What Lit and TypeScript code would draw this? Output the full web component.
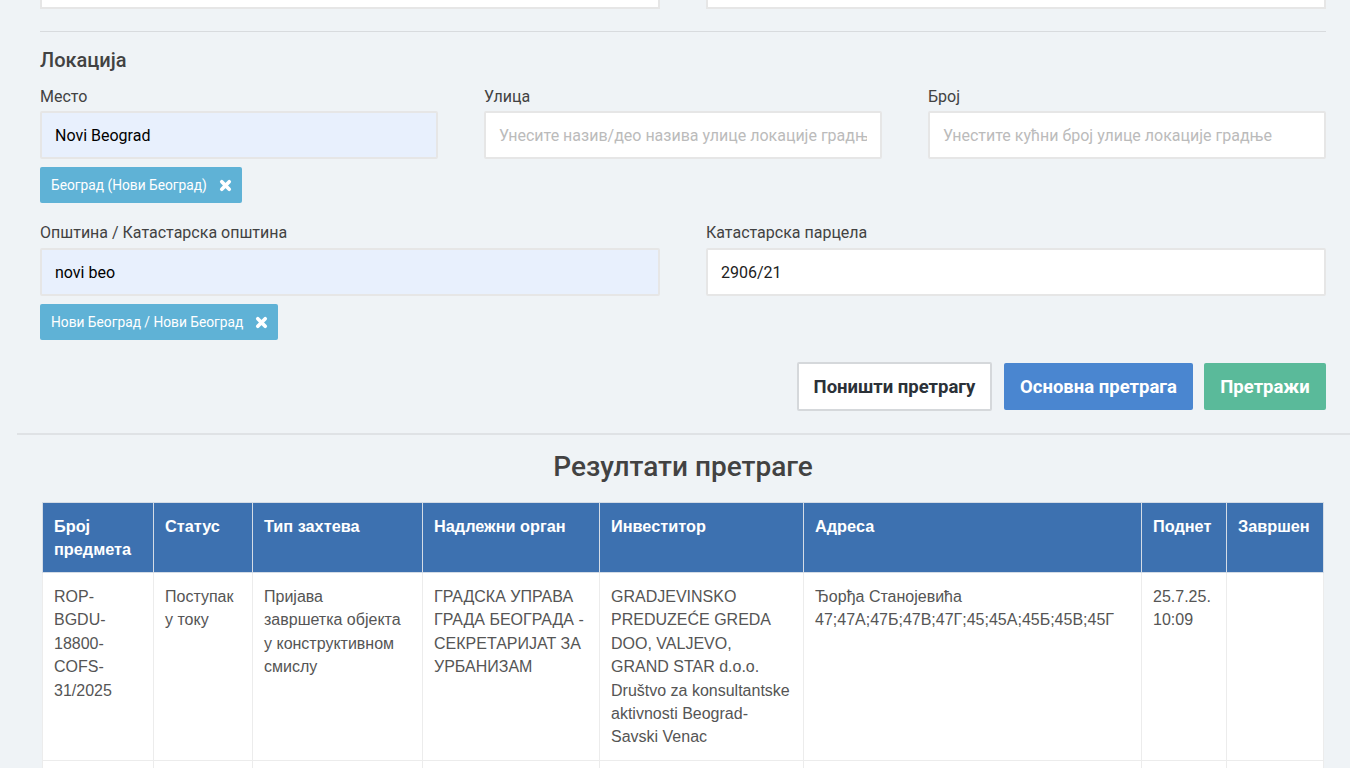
import { LitElement, html, css } from 'lit';
import { customElement } from 'lit/decorators.js';

const columns = [
  { title: 'Број предмета', width: 111 },
  { title: 'Статус', width: 99 },
  { title: 'Тип захтева', width: 170 },
  { title: 'Надлежни орган', width: 177 },
  { title: 'Инвеститор', width: 204 },
  { title: 'Адреса', width: 338 },
  { title: 'Поднет', width: 85 },
  { title: 'Завршен', width: 97 },
];

const rows = [
  [
    'ROP-BGDU-18800-COFS-31/2025',
    'Поступак у току',
    'Пријава\nзавршетка објекта у конструктивном смислу',
    'ГРАДСКА УПРАВА ГРАДА БЕОГРАДА - СЕКРЕТАРИЈАТ ЗА УРБАНИЗАМ',
    'GRADJEVINSKO PREDUZEĆE GREDA DOO, VALJEVO, GRAND STAR d.o.o. Društvo za konsultantske aktivnosti Beograd-Savski Venac',
    'Ђорђа Станојевића 47;47А;47Б;47В;47Г;45;45А;45Б;45В;45Г',
    '25.7.25. 10:09',
    '',
  ],
];

@customElement('app-root')
export class AppRoot extends LitElement {
  static styles = css`
    :host {
      display: block;
      height: 768px;
      overflow: hidden;
      background: #eff3f6;
      font-family: Roboto, sans-serif;
      color: #424242;
    }

    .form {
      padding: 0 24px 0 40px;
    }

    .cut-row {
      display: grid;
      grid-template-columns: 620px 620px;
      gap: 46px;
    }

    .cut-input {
      height: 9px;
      box-sizing: border-box;
      background: #fff;
      border: 2px solid #e6e6e6;
      border-top: none;
    }

    .rule {
      height: 1px;
      background: #d8dbde;
      margin-top: 22px;
    }

    h3 {
      margin: 16px 0 0;
      font-size: 20px;
      line-height: 24px;
      font-weight: 500;
      color: #424242;
    }

    .row-3 {
      display: grid;
      grid-template-columns: repeat(3, 398px);
      gap: 46px;
      margin-top: 15px;
    }

    .row-2 {
      display: grid;
      grid-template-columns: 620px 620px;
      gap: 46px;
      margin-top: 20px;
    }

    .row-2 label {
      margin-bottom: 6px;
    }

    label {
      display: block;
      font-size: 16px;
      line-height: 19px;
      margin-bottom: 5px;
      color: #424242;
    }

    input {
      display: block;
      width: 100%;
      height: 48px;
      box-sizing: border-box;
      padding: 0 13px;
      border: 2px solid #e6e6e6;
      border-radius: 2px;
      background: #fff;
      font: 16px Roboto, sans-serif;
      color: #212121;
      outline: none;
    }

    input.filled {
      background: #e8f0fd;
      color: #000;
    }

    input::placeholder {
      color: #bbb;
      opacity: 1;
    }

    .chip {
      display: inline-flex;
      align-items: center;
      gap: 12px;
      height: 36px;
      margin-top: 8px;
      padding: 0 10px 0 11px;
      box-sizing: border-box;
      border-radius: 2px;
      background: #5fb2d6;
      color: #fff;
      font-size: 13.75px;
      vertical-align: top;
    }

    .chip svg {
      width: 13px;
      height: 13px;
      display: block;
    }

    .actions {
      display: flex;
      justify-content: flex-end;
      align-items: center;
      gap: 11px;
      margin-top: 22px;
    }

    button {
      height: 47px;
      box-sizing: border-box;
      border: none;
      border-radius: 2px;
      color: #fff;
      font: 700 18.5px Roboto, sans-serif;
      padding: 0;
    }

    .reset {
      width: 195px;
      height: 49px;
      margin-right: 1px;
      background: #fff;
      border: 2px solid #d5d8db;
      color: #2b3138;
    }

    .basic {
      width: 189px;
      background: #4a86d0;
    }

    .search {
      width: 122px;
      background: #5aba9a;
    }

    .divider {
      height: 2px;
      margin: 22px 0 0 17px;
      background: #dfe2e5;
    }

    h2 {
      margin: 15px 0 0;
      text-align: center;
      padding-left: 16px;
      font-size: 28px;
      line-height: 34px;
      font-weight: 500;
      color: #424242;
    }

    table {
      margin: 18px 0 0 42px;
      width: 1281px;
      table-layout: fixed;
      border-collapse: collapse;
      font-family: 'Liberation Sans', Arial, sans-serif;
    }

    th {
      background: #3d71b0;
      color: #fff;
      height: 70px;
      box-sizing: border-box;
      padding: 12px 11px 10px;
      text-align: left;
      vertical-align: top;
      font-size: 16.3px;
      line-height: 23.4px;
      font-weight: 700;
      border: 1px solid #d4dce6;
    }

    td {
      background: #fff;
      padding: 12px 11px 11px;
      vertical-align: top;
      font-size: 16px;
      line-height: 23.4px;
      color: #555;
      border: 1px solid #ececec;
      white-space: pre-line;
    }
  `;

  private chip(text: string) {
    return html`<div class="chip">
      <span>${text}</span>
      <svg viewBox="0 0 14 14">
        <path d="M3 3 L11 11 M11 3 L3 11" stroke="#fff" stroke-width="4" stroke-linecap="round" fill="none" />
      </svg>
    </div>`;
  }

  render() {
    return html`
      <div class="form">
        <div class="cut-row">
          <div class="cut-input"></div>
          <div class="cut-input"></div>
        </div>
        <div class="rule"></div>
        <h3>Локација</h3>
        <div class="row-3">
          <div>
            <label>Место</label>
            <input class="filled" .value=${'Novi Beograd'} />
            ${this.chip('Београд (Нови Београд)')}
          </div>
          <div>
            <label>Улица</label>
            <input placeholder="Унесите назив/део назива улице локације градње" />
          </div>
          <div>
            <label>Број</label>
            <input placeholder="Унестите кућни број улице локације градње" />
          </div>
        </div>
        <div class="row-2">
          <div>
            <label>Општина / Катастарска општина</label>
            <input class="filled" .value=${'novi beo'} />
            ${this.chip('Нови Београд / Нови Београд')}
          </div>
          <div>
            <label>Катастарска парцела</label>
            <input .value=${'2906/21'} />
          </div>
        </div>
        <div class="actions">
          <button class="reset">Поништи претрагу</button>
          <button class="basic">Основна претрага</button>
          <button class="search">Претражи</button>
        </div>
      </div>
      <div class="divider"></div>
      <h2>Резултати претраге</h2>
      <table>
        <colgroup>
          ${columns.map((c) => html`<col style="width:${c.width}px" />`)}
        </colgroup>
        <thead>
          <tr>${columns.map((c) => html`<th>${c.title}</th>`)}</tr>
        </thead>
        <tbody>
          ${rows.map((r) => html`<tr>${r.map((v) => html`<td>${v}</td>`)}</tr>`)}
          <tr>${columns.map(() => html`<td>&nbsp;</td>`)}</tr>
        </tbody>
      </table>
    `;
  }
}
